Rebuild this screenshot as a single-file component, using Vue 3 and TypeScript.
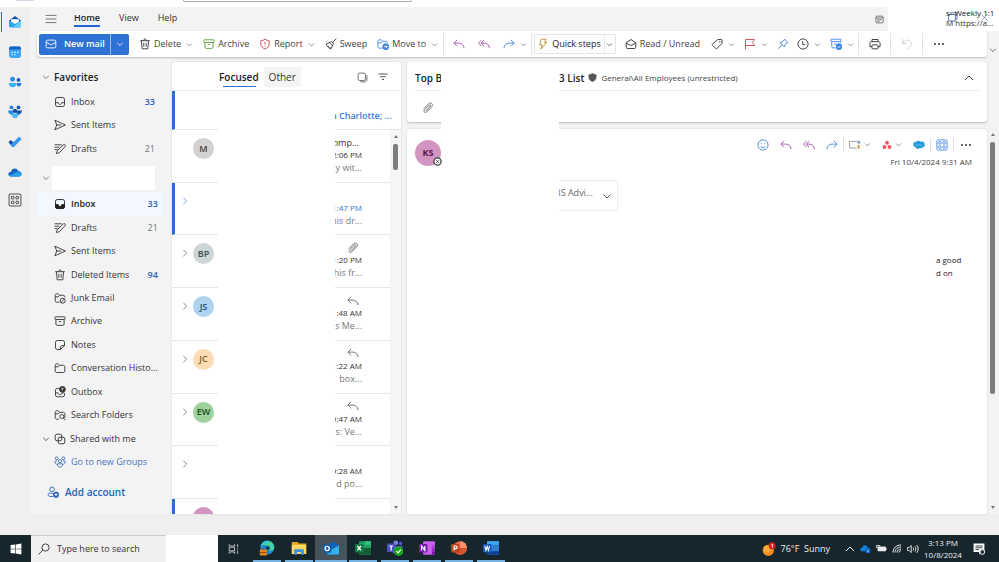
<script setup lang="ts">
interface Folder { icon: string; name: string; count?: number; strong?: boolean; selected?: boolean; link?: boolean; chevron?: boolean }
interface Mail { initials?: string; tone?: string; open?: boolean; unread?: boolean; flag?: string; sender?: string; time: string; preview: string }
interface Command { icon: string; label?: string; menu?: boolean; tone?: string; name: string }

const apps: { icon: string; name: string }[] = [
  { icon: 'app-mail', name: 'Mail' },
  { icon: 'app-calendar', name: 'Calendar' },
  { icon: 'app-people', name: 'People' },
  { icon: 'app-groups', name: 'Groups' },
  { icon: 'app-todo', name: 'To Do' },
  { icon: 'app-cloud', name: 'OneDrive' },
  { icon: 'app-more', name: 'More apps' },
]

const favorites: Folder[] = [
  { icon: 'inbox', name: 'Inbox', count: 33, strong: true },
  { icon: 'send', name: 'Sent Items' },
  { icon: 'draft', name: 'Drafts', count: 21 },
]

const folders: Folder[] = [
  { icon: 'inbox-fill', name: 'Inbox', count: 33, strong: true, selected: true },
  { icon: 'draft', name: 'Drafts', count: 21 },
  { icon: 'send', name: 'Sent Items' },
  { icon: 'trash', name: 'Deleted Items', count: 94, strong: true },
  { icon: 'junk', name: 'Junk Email' },
  { icon: 'archive', name: 'Archive' },
  { icon: 'note', name: 'Notes' },
  { icon: 'folder', name: 'Conversation Histo...' },
  { icon: 'outbox', name: 'Outbox' },
  { icon: 'folder-search', name: 'Search Folders' },
  { icon: 'shared', name: 'Shared with me', chevron: true },
  { icon: 'groups', name: 'Go to new Groups', link: true },
]

const edit: Command[] = [
  { icon: 'trash', label: 'Delete', menu: true, name: 'Delete' },
  { icon: 'archive', label: 'Archive', tone: 'green', name: 'Archive' },
  { icon: 'report', label: 'Report', menu: true, tone: 'red', name: 'Report' },
  { icon: 'sweep', label: 'Sweep', name: 'Sweep' },
  { icon: 'move', label: 'Move to', menu: true, tone: 'blue', name: 'Move to' },
]
const respond: Command[] = [
  { icon: 'reply', tone: 'purple', name: 'Reply' },
  { icon: 'reply-all', tone: 'purple', name: 'Reply all' },
  { icon: 'forward', tone: 'blue', menu: true, name: 'Forward' },
]
const organise: Command[] = [
  { icon: 'tag', menu: true, name: 'Categorize' },
  { icon: 'flag', menu: true, tone: 'red', name: 'Flag' },
  { icon: 'pin', tone: 'blue', name: 'Pin' },
  { icon: 'clock', menu: true, name: 'Snooze' },
  { icon: 'policy', menu: true, tone: 'blue', name: 'Assign policy' },
]

const mails: Mail[] = [
  { initials: 'M', tone: 'grey', sender: 'omp...', time: '2:06 PM', preview: 'y wit...' },
  { open: true, unread: true, time: '1:47 PM', preview: 'his dr...' },
  { initials: 'BP', tone: 'mist', open: true, flag: 'clip', time: '1:20 PM', preview: 'his fr...' },
  { initials: 'JS', tone: 'sky', open: true, flag: 'reply', time: '1:48 AM', preview: 's Me...' },
  { initials: 'JC', tone: 'peach', open: true, flag: 'reply', time: '1:22 AM', preview: 'box...' },
  { initials: 'EW', tone: 'mint', open: true, flag: 'reply', time: '9:47 AM', preview: 's: Ve...' },
  { open: true, time: '9:28 AM', preview: 'd po...' },
]

const tasks: { icon: string; name: string; active?: boolean }[] = [
  { icon: 'edge', name: 'Edge' },
  { icon: 'explorer', name: 'File Explorer' },
  { icon: 'outlook', name: 'Outlook', active: true },
  { icon: 'excel', name: 'Excel' },
  { icon: 'teams', name: 'Teams' },
  { icon: 'onenote', name: 'OneNote' },
  { icon: 'powerpoint', name: 'PowerPoint' },
  { icon: 'word', name: 'Word' },
]
</script>

<template>
  <div class="screen">
    <svg class="sprite" aria-hidden="true">
      <symbol id="chev" viewBox="0 0 20 20"><path d="M3 7l7 7 7-7" /></symbol>
      <symbol id="chev-up" viewBox="0 0 20 20"><path d="M2 14l8-8 8 8" /></symbol>
      <symbol id="chev-right" viewBox="0 0 20 20"><path d="M6 2l8 8-8 8" /></symbol>
      <symbol id="menu" viewBox="0 0 20 20"><path d="M1 4h18M1 10h18M1 16h18" /></symbol>
      <symbol id="mail" viewBox="0 0 20 20"><rect x="2" y="3.500" width="16" height="13" rx="2.500" /><path d="M2 7l8 4.500L18 7" /></symbol>
      <symbol id="inbox" viewBox="0 0 20 20"><rect x="2.500" y="2.500" width="15" height="15" rx="3" /><path d="M3 11h4c0 4 6 4 6 0h4" /></symbol>
      <symbol id="inbox-fill" viewBox="0 0 20 20"><rect x="2.500" y="2.500" width="15" height="15" rx="3" /><path d="M2.500 11H7c0 4 6 4 6 0h4.500v3.500a3 3 0 0 1-3 3h-9a3 3 0 0 1-3-3z" fill="currentColor" /></symbol>
      <symbol id="send" viewBox="0 0 20 20"><path d="M1.500 2L19 10 1.500 18 4.500 10zM4.500 10H12" /></symbol>
      <symbol id="draft" viewBox="0 0 20 20"><path d="M1 3h12M1 7h8M1 11h5M4 17.500l1-4L15.500 3c2-1.500 4.500 1 3 3L9 16.200z" /></symbol>
      <symbol id="trash" viewBox="0 0 20 20"><path d="M2 4.500h16M7.500 4.500c0-3.500 5-3.500 5 0M4 4.500L5.300 18h9.400L16 4.500M8 8v6.500M12 8v6.500" /></symbol>
      <symbol id="folder" viewBox="0 0 20 20"><path d="M2 15V5.500C2 4 3 3 4.500 3H7l2.500 2.500h6c1.500 0 2.500 1 2.500 2.500v7c0 1.500-1 2.500-2.500 2.500h-11C3 17.500 2 16.500 2 15zM2 8h5l2.500-2.500" /></symbol>
      <symbol id="junk" viewBox="0 0 20 20"><path d="M9 17H4.500C3 17 2 16 2 14.500V5.500C2 4 3 3 4.500 3H7l2.500 2.500h6c1.500 0 2.500 1 2.500 2.500v1M2 8h5l2.500-2.500" /><circle cx="14.500" cy="14.500" r="4.200" /><path d="M11.500 17.500l6-6" /></symbol>
      <symbol id="folder-search" viewBox="0 0 20 20"><path d="M8 17H4.500C3 17 2 16 2 14.500V5.500C2 4 3 3 4.500 3H7l2.500 2.500h6c1.500 0 2.500 1 2.500 2.500v7M2 8h5l2.500-2.500" /><circle cx="13" cy="12.500" r="3.300" /><path d="M15.500 15l3.500 3.500" /></symbol>
      <symbol id="archive" viewBox="0 0 20 20"><rect x="1.500" y="3" width="17" height="4.500" rx="1" /><path d="M3.200 7.500V15c0 1.500.8 2.300 2.300 2.300h9c1.500 0 2.300-.8 2.300-2.300V7.500M8 11h4" /></symbol>
      <symbol id="note" viewBox="0 0 20 20"><path d="M11 17.500H5.500a3 3 0 0 1-3-3v-9a3 3 0 0 1 3-3h9a3 3 0 0 1 3 3V11zM11 17.500v-4c0-1.500 1-2.500 2.500-2.500h4" /></symbol>
      <symbol id="outbox" viewBox="0 0 20 20"><path d="M9 4H5.500a3 3 0 0 0-3 3v8a3 3 0 0 0 3 3h9a3 3 0 0 0 3-3v-3M3 11.500h4c0 4 6 4 6 0h4" /><circle cx="14" cy="5.500" r="4.800" fill="currentColor" /><path d="M14 8V3.500M12 5l2-2 2 2" stroke="#fff" stroke-width="1" /></symbol>
      <symbol id="shared" viewBox="0 0 20 20"><rect x="2" y="2" width="11" height="11" rx="3" /><rect x="7" y="7" width="11" height="11" rx="3" /></symbol>
      <symbol id="groups" viewBox="0 0 20 20"><circle cx="10" cy="8.500" r="2.700" /><circle cx="4.500" cy="3.800" r="2.400" /><circle cx="15.500" cy="3.800" r="2.400" /><path d="M5.500 13h9c0 7.500-9 7.500-9 0zM5 8.500H1.500c-.5 3 1 5 3 5.500M15 8.500h3.500c.5 3-1 5-3 5.500" /></symbol>
      <symbol id="person-add" viewBox="0 0 20 20"><circle cx="8.500" cy="5.500" r="3.800" /><path d="M10 17.500H5.500C1 17.500 1 12 4 12h6" /><circle cx="15" cy="14.500" r="4.500" fill="currentColor" /><path d="M15 12v5M12.500 14.500h5" stroke="#fff" /></symbol>
      <symbol id="report" viewBox="0 0 20 20"><path d="M10 2c2.500 1.800 4.500 2.300 7 2.500V10c0 4-2.500 6.500-7 8.300C5.500 16.500 3 14 3 10V4.500C5.500 4.300 7.500 3.800 10 2zM10 6v5M10 13.200v1.200" /></symbol>
      <symbol id="sweep" viewBox="0 0 20 20"><path d="M19 1l-7 7M9.500 6.500c2-1.500 5.500 2 4 4L10 18c-3-.5-7-4-8-8zM7.500 8l5 5M6 13l-1 2M9 15l-1 2" /></symbol>
      <symbol id="move" viewBox="0 0 20 20"><path d="M9 17H4c-1.500 0-2.500-1-2.500-2.500V5.500C1.500 4 2.500 3 4 3h3l2.500 2.500H15c1.500 0 2.500 1 2.500 2.500v1M1.500 8H7l2.500-2.500" /><circle cx="14.500" cy="14.500" r="5" fill="currentColor" /><path d="M12 14.500h5M15 12.500l2 2-2 2" stroke="#fff" /></symbol>
      <symbol id="reply" viewBox="0 0 20 20"><path d="M7 3L1.500 8.500 7 14M1.500 8.500h8c5 0 8.500 3 9 8.500" /></symbol>
      <symbol id="reply-all" viewBox="0 0 20 20"><path d="M5.500 3.500L1 8.500l4.500 5M10 3.500L5.500 8.500l4.500 5M5.500 8.500h5c5 0 8 3.500 8.500 8.500" /></symbol>
      <symbol id="forward" viewBox="0 0 20 20"><path d="M13 3l5.500 5.500L13 14M18.500 8.500h-8c-5 0-8.500 3-9 8.500" /></symbol>
      <symbol id="bolt" viewBox="0 0 20 20"><path d="M7 2h8l-2.500 5.500H16L6.500 18.500l2-7H4.500z" /></symbol>
      <symbol id="read" viewBox="0 0 20 20"><path d="M2 8l8-5.500L18 8v7.500c0 1-.8 2-2 2H4c-1.200 0-2-1-2-2zM2 8.500l8 4 8-4" /></symbol>
      <symbol id="tag" viewBox="0 0 20 20"><path d="M11.500 2.500H17c1 0 1.500.6 1.500 1.500v5L10 17.300c-.8.700-1.500.7-2.200 0L2.500 12c-.7-.7-.7-1.500 0-2.200z" /><circle cx="14.800" cy="6.200" r=".6" /></symbol>
      <symbol id="flag" viewBox="0 0 20 20"><path d="M2.500 19V2.500h15L14 7.500l3.500 5h-15" /></symbol>
      <symbol id="pin" viewBox="0 0 20 20"><path d="M12.500 2l5.500 5.500-4 2.500-1.500 5L5 7.500 10 6zM8.500 11.500L2 18" /></symbol>
      <symbol id="clock" viewBox="0 0 20 20"><circle cx="10" cy="10" r="8.500" /><path d="M9.500 5v6h4" /></symbol>
      <symbol id="policy" viewBox="0 0 20 20"><rect x="1.500" y="2" width="17" height="4" rx="1" /><path d="M3 6v8.500c0 1.500.8 2 2 2h4M17 6v3M7 10h5" /><circle cx="15" cy="14.500" r="4.800" fill="currentColor" /><path d="M12.800 14.500l1.600 1.600 2.800-3" stroke="#fff" /></symbol>
      <symbol id="print" viewBox="0 0 20 20"><path d="M5 6V2.500h10V6M5 14.500H1.500V9c0-2 1-3 3-3h11c2 0 3 1 3 3v5.500H15" /><rect x="5" y="11.500" width="10" height="6.500" rx="1" /></symbol>
      <symbol id="undo" viewBox="0 0 20 20"><path d="M3 2v7h7M3 9c4-6 9-7 12.500-3.500S18 13 10 18.500" /></symbol>
      <symbol id="clip" viewBox="0 0 20 20"><path d="M3 11l8-8c4-3.500 8.500 1 5.500 4.500L8 16.500c-3 2.500-6-.5-4-3.200l8-8c2-1.500 3.500.4 2 2l-7.500 7.500" /></symbol>
      <symbol id="filter" viewBox="0 0 20 20"><path d="M1 4h18M4.500 9.500h11M8 15h4" /></symbol>
      <symbol id="stack" viewBox="0 0 20 20"><rect x="2" y="2" width="13.500" height="13.500" rx="3" /><path d="M6 18h7c3.500 0 5-1.500 5-5V6" /></symbol>
      <symbol id="event" viewBox="0 0 20 20"><rect x="2" y="2.500" width="16" height="15" rx="2" /><path d="M2 6.500h16M5 10.500h10M5 14h5" /></symbol>
      <symbol id="shield" viewBox="0 0 20 20"><path d="M10 1c2.500 2 5 2.600 8 2.800V9c0 5-2.800 8-8 10-5.200-2-8-5-8-10V3.800C5 3.600 7.500 3 10 1z" fill="currentColor" /></symbol>
      <symbol id="smile" viewBox="0 0 20 20"><circle cx="10" cy="10" r="8.500" /><path d="M6 12.500c2 2.500 6 2.500 8 0M7 7v1.500M13 7v1.500" /></symbol>
      <symbol id="grid" viewBox="0 0 20 20"><rect x="1.500" y="1.500" width="17" height="17" rx="2.500" /><rect x="4.500" y="4.500" width="4" height="4" rx="1" /><rect x="11.500" y="4.500" width="4" height="4" rx="1" /><rect x="4.500" y="11.500" width="4" height="4" rx="1" /><rect x="11.500" y="11.500" width="4" height="4" rx="1" /></symbol>
      <symbol id="addin" viewBox="0 0 20 20"><path d="M1 4h17v4M1 4v11h12" stroke="#999" /><path d="M16 10v6" stroke="#c09030" stroke-width="3" /><circle cx="16" cy="6" r="1.500" fill="#3b78d8" stroke="none" /></symbol>
      <symbol id="asana" viewBox="0 0 20 20"><g fill="#f0525f" stroke="none"><circle cx="10" cy="5.500" r="3.800" /><circle cx="5" cy="14" r="3.800" /><circle cx="15" cy="14" r="3.800" /></g></symbol>
      <symbol id="salesforce" viewBox="0 0 20 20"><g fill="#229bd8" stroke="none"><circle cx="5" cy="9" r="4.500" /><circle cx="9" cy="7" r="4" /><circle cx="14.500" cy="9" r="5" /><circle cx="8" cy="12.500" r="4" /><circle cx="12.500" cy="12" r="3.500" /></g><path d="M4 10h12" stroke="#8fd0f2" stroke-width="1" /></symbol>
      <symbol id="restore" viewBox="0 0 20 20"><rect x="1.500" y="5" width="13" height="13" /><path d="M5.500 5V1.500H18V14h-3.500" /></symbol>
      <symbol id="close" viewBox="0 0 20 20"><path d="M1 1l18 18M19 1L1 19" /></symbol>
      <symbol id="search" viewBox="0 0 20 20"><circle cx="12.500" cy="7.500" r="6" /><path d="M8 12l-7 7" /></symbol>

      <symbol id="app-mail" viewBox="0 0 20 20"><g stroke="none"><path d="M2 7.500L10 1.500l8 6V13H2z" fill="#174ea6" /><path d="M4.500 6h11v7h-11z" fill="#fff" /><path d="M1.500 8l8.500 5 8.500-5v7.500c0 1.700-1 2.500-2.500 2.500H4c-1.500 0-2.500-.8-2.500-2.500z" fill="#2aa5ee" /><path d="M18.500 8v7.500c0 1.700-1 2.500-2.500 2.500H7z" fill="#5ed0f8" /></g></symbol>
      <symbol id="app-calendar" viewBox="0 0 20 20"><g stroke="none"><rect x="1.500" y="2" width="17" height="16.500" rx="3" fill="#3da4f2" /><path d="M1.500 6.500V5c0-2 1-3 3-3h11c2 0 3 1 3 3v1.500z" fill="#1760bd" /></g><path d="M5 10.500h2M9 10.500h2M13 10.500h2M5 14h2M9 14h2" stroke="#fff" /></symbol>
      <symbol id="app-people" viewBox="0 0 20 20"><g stroke="none"><circle cx="6.500" cy="6" r="3.500" fill="#2b8ae8" /><circle cx="15" cy="7" r="2.800" fill="#1a5fc0" /><path d="M1 11.500h11c1 8-11 8-11 0z" fill="#35b6f5" /><path d="M12.500 11.500H19c.5 6-6.500 6-6.500 2z" fill="#2777d8" /></g></symbol>
      <symbol id="app-groups" viewBox="0 0 20 20"><g stroke="none"><circle cx="5" cy="3.500" r="2.700" fill="#2b7de0" /><circle cx="15" cy="3.500" r="2.700" fill="#1a5fc0" /><path d="M0 8h8v7C3 14 0 12 0 8z" fill="#258de8" /><path d="M20 8h-8v7c5-1 8-3 8-7z" fill="#1555b0" /><circle cx="10" cy="8.500" r="3" fill="#164ba0" /><path d="M5 12h10c0 9-10 9-10 0z" fill="#45b8f4" /></g></symbol>
      <symbol id="app-todo" viewBox="0 0 20 20"><g stroke="none"><path d="M.5 10.500L4 7l6 5.500-3.500 4.500z" fill="#174fae" /><path d="M6.500 17L3.800 14 16 2.500l3.500 3.300L8.500 17c-.7.700-1.400.7-2 0z" fill="#3297ee" /></g></symbol>
      <symbol id="app-cloud" viewBox="0 0 20 20"><g stroke="none"><path d="M4 16.500C-1 16.500-.5 9.500 4.500 9.500 5 4 13 3 14.500 8.500c6 0 6.500 8 1 8z" fill="#1565c0" /><path d="M1.500 15L13 9.500c8-2 8 7 2.500 7H4c-1.200 0-2-.6-2.500-1.500z" fill="#2a9bea" /></g></symbol>
      <symbol id="app-more" viewBox="0 0 20 20"><g fill="none" stroke="#555"><rect x="1.500" y="1.500" width="17" height="17" rx="2" /><circle cx="6.700" cy="6.700" r="2" /><circle cx="13.300" cy="6.700" r="2" /><circle cx="6.700" cy="13.300" r="2" /><circle cx="13.300" cy="13.300" r="2" /></g></symbol>

      <symbol id="windows" viewBox="0 0 20 20"><path d="M1 3.500L9 2.500v7H1zM10 2.300L19 1v8.500h-9zM1 10.500h8v7l-8-1zM10 10.500h9V19l-9-1.300z" fill="#fff" stroke="none" /></symbol>
      <symbol id="taskview" viewBox="0 0 20 20"><path d="M2 2v3h9V2M2 18v-3h9v3M2 7h9v6H2zM16 2v5M16 9v2M16 13v5" /></symbol>
      <symbol id="edge" viewBox="0 0 20 20"><g stroke="none"><circle cx="10.500" cy="9.500" r="8.700" fill="#1b87d6" /><path d="M2 8C4-1 17-1.500 19 8c1 6-6 7-7 3.500C13 7 7 4 2 8z" fill="#43d39a" /><path d="M2 8C4 1 10 0 14 2 9 2 6 5 2 8z" fill="#2fc3e6" /><circle cx="11" cy="10" r="2.600" fill="#123a63" /><rect x="1" y="12" width="9" height="7.500" rx="1" fill="#e08a1c" /><rect x="1" y="15" width="9" height="1" fill="#7a4206" /><rect x="4" y="10.500" width="3" height="1.800" fill="#8c4f0c" /></g></symbol>
      <symbol id="explorer" viewBox="0 0 20 20"><g stroke="none"><path d="M1 2.500h7l2 2h9v13H1z" fill="#e5a51d" /><path d="M1 6h18v11.500H1z" fill="#fbd867" /><path d="M4 18.500V11.500h12v7h-3.500V15h-5v3.500z" fill="#3a93df" /></g></symbol>
      <symbol id="outlook" viewBox="0 0 20 20"><g stroke="none"><path d="M5 7l8-5.500L20 7v9.500c0 1-.5 1.500-1.500 1.500H6.500C5.500 18 5 17.500 5 16.500z" fill="#1364b8" /><path d="M5 15l15-8v9.500c0 1-.5 1.500-1.500 1.500H6z" fill="#35b2f0" /><rect x="0" y="5.500" width="10.500" height="10.500" rx="1.500" fill="#0f5cb5" /></g><circle cx="5.200" cy="10.700" r="2.600" stroke="#fff" stroke-width="1.600" /></symbol>
      <symbol id="excel" viewBox="0 0 20 20"><g stroke="none"><rect x="5" y="1.500" width="15" height="17" rx="1.500" fill="#21a366" /><path d="M5 10h15v7c0 1-.5 1.500-1.500 1.500h-12C5.500 18.500 5 18 5 17z" fill="#185c37" /><path d="M12.500 1.500h6c1 0 1.500.5 1.500 1.500v3h-7.500z" fill="#33c481" /><rect x="0" y="5" width="10.500" height="10.500" rx="1" fill="#107c41" /></g><path d="M3 7.500l4.500 5.500M7.500 7.500L3 13" stroke="#fff" stroke-width="1.600" /></symbol>
      <symbol id="teams" viewBox="0 0 20 20"><g stroke="none"><circle cx="11" cy="3.500" r="3" fill="#7b83eb" /><circle cx="17" cy="4.500" r="2.200" fill="#5059c9" /><path d="M6 7.500h13.500V14c-1 5-12 5-13.500 0z" fill="#5059c9" /><rect x="0" y="4.500" width="10.500" height="10.500" rx="1" fill="#4b53bc" /><circle cx="14.500" cy="14" r="6" fill="#18a318" /></g><path d="M3 7.500h4.500M5.200 7.500v5.500M11.800 14l2 2 3.500-4" stroke="#fff" stroke-width="1.500" /></symbol>
      <symbol id="onenote" viewBox="0 0 20 20"><g stroke="none"><rect x="5" y="1.500" width="15" height="17" rx="1.500" fill="#ca64ea" /><path d="M16 6h4v4.200h-4z" fill="#ae4bd5" /><path d="M16 10.200h4v4.200h-4z" fill="#9332bf" /><path d="M16 14.400h4V17c0 1-.5 1.500-1.500 1.500H16z" fill="#7719aa" /><rect x="0" y="5" width="10.500" height="10.500" rx="1" fill="#7719aa" /></g><path d="M3.200 13V7.500L7.300 13V7.500" stroke="#fff" stroke-width="1.500" /></symbol>
      <symbol id="powerpoint" viewBox="0 0 20 20"><g stroke="none"><circle cx="11.500" cy="10" r="8.500" fill="#ed6c47" /><path d="M11.500 1.500A8.500 8.500 0 0 1 20 10h-8.500z" fill="#ff8f6b" /><path d="M3 10h17c0 11-17 11-17 0z" fill="#d35230" /><rect x="0" y="5" width="10.500" height="10.500" rx="1" fill="#c43e1c" /></g><path d="M4 13.200V7.500h2.200c2 0 2 3.200 0 3.200H4" stroke="#fff" stroke-width="1.500" /></symbol>
      <symbol id="word" viewBox="0 0 20 20"><g stroke="none"><rect x="5" y="1.500" width="15" height="17" rx="1.500" fill="#2b7cd3" /><path d="M5 3c0-1 .5-1.500 1.500-1.500h12c1 0 1.500.5 1.500 1.500v3H5z" fill="#41a5ee" /><path d="M5 14.200h15V17c0 1-.5 1.500-1.500 1.500h-12C5.500 18.500 5 18 5 17z" fill="#103f91" /><rect x="0" y="5" width="10.500" height="10.500" rx="1" fill="#185abd" /></g><path d="M2.200 7.500l1.500 5.500 1.500-5 1.500 5 1.500-5.500" stroke="#fff" stroke-width="1.300" /></symbol>
      <symbol id="sun" viewBox="0 0 20 20"><g stroke="none"><circle cx="9" cy="12" r="8" fill="#f58a1f" /><circle cx="7" cy="10" r="5" fill="#fba83a" /><circle cx="14.500" cy="5.500" r="5" fill="#d3211f" /></g><path d="M13.500 4l1.300-1v5" stroke="#fff" stroke-width="1.200" /></symbol>
      <symbol id="tray-cloud" viewBox="0 0 20 20"><g stroke="none"><path d="M4 15C-1 15-.5 8 4 8.500 5 3 13 3 14 8c5 0 5 7 1 7z" fill="#1480dc" /><circle cx="14.500" cy="14" r="5" fill="#0b62b8" /></g><path d="M14.500 13v4M14.500 11v.5" stroke="#fff" /></symbol>
      <symbol id="battery" viewBox="0 0 20 20"><rect x="3" y="6.500" width="15" height="8.500" fill="#e8ecee" stroke="none" /><path d="M1 4.500h6v4H1zM18.500 9v3.500" /></symbol>
      <symbol id="wifi" viewBox="0 0 20 20"><path d="M2 17C2 8 9 2 18 2M6 17C6 10.500 11 6 18 6M10 17c0-4 3.500-7 8-7M14 17c0-2 2-3.500 4-3.500" /></symbol>
      <symbol id="volume" viewBox="0 0 20 20"><path d="M1 7.500h2.500L7 4v12l-3.500-3.500H1zM10 7.500c1.300 1.500 1.300 3.500 0 5M13 5.500c2.300 2.500 2.300 6.500 0 9M16 3.500c3.500 4 3.500 9 0 13" /></symbol>
      <symbol id="action" viewBox="0 0 20 20"><path d="M1 1h18v14h-6l-3 4v-4H1z" fill="#fff" stroke="none" /><path d="M4 5h12M4 8h12M4 11h6" stroke="#26343c" /><circle cx="15.500" cy="15" r="4" fill="#26343c" stroke="#fff" /></symbol>
    </svg>

    <header class="titlebar"><span class="stub"></span><span class="searchedge"></span></header>

    <div class="window">
      <nav class="rail" aria-label="Apps">
        <button v-for="(a, i) in apps" :key="a.icon" :class="['app', { current: i === 0 }]" :aria-label="a.name">
          <svg class="ic i14"><use :href="'#' + a.icon" /></svg>
        </button>
      </nav>

      <div class="content">
        <div class="tabs">
          <button class="burger" aria-label="Toggle navigation"><svg class="ic i12"><use href="#menu" /></svg></button>
          <button class="tab active">Home</button>
          <button class="tab">View</button>
          <button class="tab">Help</button>
          <button class="day" aria-label="My Day"><svg class="ic i9"><use href="#event" /></svg></button>
          <div class="reminder">
            <div class="remindertext"><b>s- Weekly 1:1</b><span>M https://a...</span></div>
            <button class="winbtn restore" aria-label="Restore"><svg class="ic i10"><use href="#restore" /></svg></button>
            <button class="winbtn close" aria-label="Close"><svg class="ic i7"><use href="#close" /></svg></button>
          </div>
        </div>

        <div class="ribbonrow">
          <div class="ribbon">
            <div class="newmail">
              <button class="new"><svg class="ic i12"><use href="#mail" /></svg>New mail</button>
              <button class="newmore" aria-label="New item options"><svg class="ic i8"><use href="#chev" /></svg></button>
            </div>
            <div class="group edit">
              <button v-for="c in edit" :key="c.name" :class="['cmd', c.tone]">
                <svg class="ic i12"><use :href="'#' + c.icon" /></svg><span>{{ c.label }}</span>
                <svg v-if="c.menu" class="ic i6 caret"><use href="#chev" /></svg>
              </button>
            </div>
            <div class="group respond">
              <button v-for="c in respond" :key="c.name" :class="['cmd', c.tone]" :aria-label="c.name">
                <svg class="ic i12"><use :href="'#' + c.icon" /></svg>
                <svg v-if="c.menu" class="ic i6 caret"><use href="#chev" /></svg>
              </button>
            </div>
            <div class="quick">
              <button class="cmd gold"><svg class="ic i12"><use href="#bolt" /></svg><span class="dark">Quick steps</span></button>
              <button class="quickmore" aria-label="Quick step options"><svg class="ic i6"><use href="#chev" /></svg></button>
            </div>
            <button class="cmd read"><svg class="ic i12"><use href="#read" /></svg><span>Read / Unread</span></button>
            <div class="group organise">
              <button v-for="c in organise" :key="c.name" :class="['cmd', c.tone]" :aria-label="c.name">
                <svg class="ic i12"><use :href="'#' + c.icon" /></svg>
                <svg v-if="c.menu" class="ic i6 caret"><use href="#chev" /></svg>
              </button>
            </div>
            <button class="cmd cell" aria-label="Print"><svg class="ic i12"><use href="#print" /></svg></button>
            <button class="cmd cell faint" aria-label="Undo"><svg class="ic i12"><use href="#undo" /></svg></button>
            <button class="cmd cell dots" aria-label="More options"><i></i><i></i><i></i></button>
          </div>
          <button class="collapse" aria-label="Ribbon options"><svg class="ic i8"><use href="#chev" /></svg></button>
        </div>

        <main class="panes">
          <nav class="folders" aria-label="Folders">
            <h2 class="favhead"><svg class="ic i8"><use href="#chev" /></svg>Favorites</h2>
            <ul class="tree short">
              <li v-for="f in favorites" :key="f.name">
                <a href="#" class="folder"><svg class="ic i12"><use :href="'#' + f.icon" /></svg><span>{{ f.name }}</span><em v-if="f.count" :class="{ bold: f.strong }">{{ f.count }}</em></a>
              </li>
            </ul>
            <div class="account"><svg class="ic i8"><use href="#chev" /></svg><span class="blank"></span></div>
            <ul class="tree long">
              <li v-for="f in folders" :key="f.name">
                <a href="#" :class="['folder', { selected: f.selected, link: f.link, parent: f.chevron }]">
                  <svg v-if="f.chevron" class="ic i8"><use href="#chev" /></svg>
                  <svg class="ic i12"><use :href="'#' + f.icon" /></svg><span>{{ f.name }}</span><em v-if="f.count" :class="{ bold: f.strong }">{{ f.count }}</em>
                </a>
              </li>
            </ul>
            <button class="addaccount"><svg class="ic i12"><use href="#person-add" /></svg>Add account</button>
          </nav>

          <section class="list card">
            <div class="listhead">
              <button class="filter on">Focused</button>
              <button class="filter off">Other</button>
              <button class="tool first" aria-label="Select"><svg class="ic i11"><use href="#stack" /></svg></button>
              <button class="tool" aria-label="Filter"><svg class="ic i10"><use href="#filter" /></svg></button>
            </div>
            <div class="other"><div class="lead unread"></div><div></div><div class="tail"><span>n Charlotte; ...</span></div></div>
            <div class="scroller">
              <div class="rows">
                <article v-for="m in mails" :key="m.time" class="mail">
                  <div :class="['lead', { unread: m.unread }]">
                    <svg class="ic i8 expand" :class="{ hidden: !m.open }"><use href="#chev-right" /></svg>
                    <span v-if="m.initials" :class="['avatar', m.tone]">{{ m.initials }}</span>
                  </div>
                  <div></div>
                  <div class="tail">
                    <span class="line mark">{{ m.sender }}<svg v-if="m.flag" class="ic i12"><use :href="'#' + m.flag" /></svg></span>
                    <span :class="['line', 'time', { fresh: m.unread }]">{{ m.time }}</span>
                    <span class="line preview">{{ m.preview }}</span>
                  </div>
                </article>
                <article class="mail cut"><div class="lead unread"><span class="avatar pink"></span></div></article>
              </div>
              <div class="bar"><i class="up"></i><i class="thumb short"></i><i class="down"></i></div>
            </div>
          </section>

          <section class="reading">
            <div class="card subject">
              <div class="titleline">
                <h1><span class="tleft">Top B</span><span>3 List</span></h1>
                <svg class="ic i9 shield"><use href="#shield" /></svg>
                <span class="label">General\All Employees (unrestricted)</span>
                <button class="fold" aria-label="Collapse header"><svg class="ic i10"><use href="#chev-up" /></svg></button>
              </div>
              <div class="attachline"><svg class="ic i12"><use href="#clip" /></svg></div>
            </div>
            <div class="card message">
              <div class="msghead">
                <span class="avatar big pink">KS<svg class="presence" viewBox="0 0 10 10"><circle cx="5" cy="5" r="4" fill="#fff" stroke="#444" stroke-width="1.500" /><path d="M3.500 3.500l3 3M6.500 3.500l-3 3" stroke="#444" /></svg></span>
                <div class="side">
                  <div class="actions">
                    <button class="blue" aria-label="React"><svg class="ic i12"><use href="#smile" /></svg></button>
                    <button class="purple" aria-label="Reply"><svg class="ic i12"><use href="#reply" /></svg></button>
                    <button class="purple" aria-label="Reply all"><svg class="ic i12"><use href="#reply-all" /></svg></button>
                    <button class="blue" aria-label="Forward"><svg class="ic i12"><use href="#forward" /></svg></button>
                    <button class="pair ruled" aria-label="Report add-in"><svg class="ic i12"><use href="#addin" /></svg><svg class="ic i6"><use href="#chev" /></svg></button>
                    <button class="pair" aria-label="Asana"><svg class="ic i10"><use href="#asana" /></svg><svg class="ic i6"><use href="#chev" /></svg></button>
                    <button class="salesforce" aria-label="Salesforce"><svg class="ic i12"><use href="#salesforce" /></svg></button>
                    <button class="blue ruled" aria-label="Apps"><svg class="ic i12"><use href="#grid" /></svg></button>
                    <button class="dots ruled" aria-label="More actions"><i></i><i></i><i></i></button>
                  </div>
                  <time>Fri 10/4/2024 9:31 AM</time>
                </div>
              </div>
              <div class="attachment"><span class="file"><span>BS Advi...</span></span><button aria-label="Attachment options"><svg class="ic i10"><use href="#chev" /></svg></button></div>
              <p class="body"><span>a good</span><span>d on</span></p>
            </div>
            <div class="cover"></div>
          </section>
          <div class="bar page"><i class="up"></i><i class="thumb"></i><i class="down"></i></div>
        </main>
      </div>
    </div>

    <footer class="taskbar">
      <button class="start" aria-label="Start"><svg class="ic i12"><use href="#windows" /></svg></button>
      <label class="find"><svg class="ic i12"><use href="#search" /></svg><input type="text" placeholder="Type here to search" aria-label="Type here to search" /></label>
      <span class="gap"></span>
      <button class="task plain" aria-label="Task View"><svg class="ic i12"><use href="#taskview" /></svg></button>
      <button v-for="t in tasks" :key="t.name" :class="['task', { active: t.active }]" :aria-label="t.name"><svg class="ic i16"><use :href="'#' + t.icon" /></svg></button>
      <div class="weather"><svg class="ic i14"><use href="#sun" /></svg><span>76°F&nbsp; Sunny</span></div>
      <div class="tray">
        <svg class="ic i10"><use href="#chev-up" /></svg>
        <svg class="ic i11"><use href="#tray-cloud" /></svg>
        <svg class="ic i11"><use href="#battery" /></svg>
        <svg class="ic i10"><use href="#wifi" /></svg>
        <svg class="ic i12"><use href="#volume" /></svg>
      </div>
      <div class="clock"><span>3:13 PM</span><span>10/8/2024</span></div>
      <button class="notify" aria-label="Notifications"><svg class="ic i12"><use href="#action" /></svg></button>
    </footer>
  </div>
</template>

<style>
body { margin: 0; overflow: hidden; background: #efefef; }
</style>

<style scoped>
.screen { height: 100vh; display: flex; flex-direction: column; background: #efefef; color: #333; font-family: "Open Sans", "Noto Sans", sans-serif; font-size: 9px; line-height: 12px; }
.screen *, .screen *::before, .screen *::after { box-sizing: border-box; }
button { font: inherit; color: inherit; background: none; border: 0; padding: 0; margin: 0; display: flex; align-items: center; flex: none; white-space: nowrap; }
a { color: inherit; text-decoration: none; }
.sprite { position: absolute; width: 0; height: 0; }
.ic { fill: none; stroke: currentColor; stroke-width: 1.500; flex: none; display: block; width: 12px; height: 12px; }
.i6 { width: 7px; height: 7px; stroke-width: 2; }
.i7 { width: 7px; height: 7px; }
.i8 { width: 8px; height: 8px; stroke-width: 2; }
.i9 { width: 9px; height: 9px; }
.i10 { width: 10px; height: 10px; stroke-width: 2; }
.i11 { width: 11px; height: 11px; }
.i14 { width: 14px; height: 14px; }
.i16 { width: 16px; height: 16px; }

.titlebar { height: 7px; flex: none; display: flex; align-items: flex-start; background: #fff; }
.stub { width: 18px; height: 1px; margin-left: 16px; background: #d4d6e6; }
.searchedge { width: 229px; height: 2px; margin-left: 149px; border: 1px solid #aaa; border-top: 0; border-radius: 0 0 2px 2px; }

.window { flex: 1; min-height: 0; display: flex; margin-bottom: 21px; }
.rail { width: 31px; flex: none; display: flex; flex-direction: column; }
.app { height: 30px; padding-left: 8px; }
.app:last-child { height: 26px; }
.app.current::before { content: ""; width: 1px; height: 20px; margin: 0 6px 0 -7px; background: #2c66c4; }
.content { flex: 1; min-width: 0; display: flex; flex-direction: column; background: #f3f3f3; }

.tabs { height: 24px; flex: none; display: flex; padding-left: 14px; }
.burger { width: 29px; color: #666; }
.tab { height: 20px; padding-top: 4px; margin-right: 19px; border-bottom: 2px solid transparent; }
.tab.active { font-weight: 600; border-color: #2165d1; color: #222; }
.day { margin-left: auto; margin-right: 4px; color: #444; }
.reminder { position: relative; width: 111px; background: #fff; overflow: hidden; }
.remindertext { height: 24px; padding-left: 58px; display: flex; flex-direction: column; font-size: 8px; line-height: 10px; color: #333; white-space: nowrap; }
.remindertext b { font-weight: 400; color: #111; padding-top: 1px; }
.winbtn { position: absolute; top: 5px; color: #3a527e; }
.winbtn .ic { stroke-width: 1.500; }
.restore { left: 60px; }
.close { right: 11px; top: 7px; }

.ribbonrow { display: flex; flex: none; padding-left: 6px; height: 26px; }
.ribbon { flex: 1; display: flex; align-items: center; padding-left: 2px; background: #fff; border-radius: 3px; box-shadow: 0 1px 2px #bbb; }
.collapse { width: 12px; justify-content: center; padding-top: 12px; color: #555; }
.newmail { display: flex; height: 21px; width: 90px; background: #2f72d6; border-radius: 2px; color: #fff; font-weight: 600; overflow: hidden; }
.new { flex: 1; gap: 7px; padding-left: 6px; }
.newmore { width: 19px; justify-content: center; border-left: 1px solid #9dbdf0; }
.group { display: flex; height: 22px; align-items: center; }
.cmd { gap: 3px; height: 22px; }
.cmd > span { color: #444; }
.cmd .dark { color: #222; }
.caret { margin-left: 2px; }
.edit { gap: 10px; padding: 0 5px 0 10px; border-right: 1px solid #e2e2e2; }
.respond { gap: 13px; padding: 0 4px 0 9px; border-right: 1px solid #e2e2e2; }
.green > .ic:first-child { color: #5d9b3e; }
.red > .ic:first-child { color: #c4464d; }
.blue, .blue > .ic:first-child { color: #3f83dc; }
.purple, .purple > .ic:first-child { color: #a54fb3; }
.gold > .ic:first-child { color: #b8892f; }
.quick { display: flex; height: 20px; margin-left: 2px; border: 1px solid #e4e4e4; border-radius: 2px; }
.quick .cmd { height: 18px; padding: 0 3px 0 2px; }
.quickmore { width: 11px; justify-content: center; border-left: 1px solid #e4e4e4; }
.read { margin-left: 9px; }
.organise { flex: 1; justify-content: space-between; padding: 0 4px 0 11px; border-right: 1px solid #e2e2e2; }
.cmd .caret { color: #666; }
.cell { width: 32px; justify-content: center; border-right: 1px solid #e2e2e2; }
.faint { color: #ccc; }
.cell.dots { border: 0; margin-right: 32px; }
.dots { gap: 2px; justify-content: center; }
.dots i { width: 2px; height: 2px; border-radius: 1px; background: #333; }

.panes { flex: 1; min-height: 0; display: flex; padding-top: 5px; }
.folders { width: 141px; flex: none; display: flex; flex-direction: column; }
.favhead { height: 28px; flex: none; margin: 0; padding: 2px 0 0 11px; display: flex; align-items: center; gap: 4px; font-size: 10px; font-weight: 600; color: #222; }
.favhead .ic, .account .ic { color: #666; }
.tree { list-style: none; margin: 0; padding: 0 12px 0 6px; display: grid; grid-auto-rows: 1fr; }
.tree.short { flex: 3; }
.tree.long { flex: 12; }
.folder { height: 100%; display: flex; align-items: center; gap: 5px; padding: 0 5px 0 17px; white-space: nowrap; color: #333; }
.folder em { margin-left: auto; font-style: normal; color: #777; }
.folder em.bold { font-weight: 600; color: #2a62b8; }
.folder.selected { background: #f3f8fe; font-weight: 600; color: #222; border-radius: 2px; }
.folder.parent { padding-left: 5px; gap: 4px; }
.folder.link { color: #4674bd; }
.account { height: 32px; flex: none; display: flex; align-items: center; gap: 2px; padding: 4px 17px 0 11px; }
.blank { flex: 1; height: 24px; background: #fff; }
.addaccount { height: 40px; padding: 0 0 4px 16px; gap: 6px; font-size: 10px; font-weight: 600; color: #2a62b8; }

.card { background: #fff; border-radius: 3px; box-shadow: 0 0 2px #ccc; }
.list { width: 229px; flex: none; display: flex; flex-direction: column; border-radius: 3px 3px 0 0; overflow: hidden; }
.listhead { height: 29px; flex: none; display: flex; align-items: center; padding: 2px 13px 0 47px; border-bottom: 1px solid #e9e9e9; }
.filter { height: 20px; font-size: 10px; }
.on { position: relative; font-weight: 600; color: #222; margin-right: 5px; }
.on::after { content: ""; position: absolute; left: 4px; right: 3px; bottom: 0; height: 1px; background: #2f72d6; }
.off { padding: 0 5px; background: #f4f4f4; border-radius: 2px; }
.tool { color: #555; margin-left: 10px; }
.tool.first { margin-left: auto; }
.other, .mail { display: grid; grid-template-columns: 46px 117px 1fr; min-height: 0; }
.other { height: 39px; flex: none; }
.lead { display: flex; border-bottom: 1px solid #e6e6e6; padding: 8px 0 0 9px; gap: 4px; overflow: hidden; }
.lead.unread { border-left: 3px solid #2b6cd4; padding-left: 6px; }
.expand { margin-top: 6px; color: #666; }
.unread .expand { color: #5a8bd4; }
.hidden { visibility: hidden; }
.avatar { width: 21px; height: 21px; border-radius: 50%; display: flex; align-items: center; justify-content: center; flex: none; font-size: 9px; font-weight: 600; }
.grey { background: #d3d2d0; color: #444; }
.shield { color: #555; }
.mist { background: #cdd5d7; color: #3b4b52; }
.sky { background: #aed3f0; color: #1c4a74; }
.peach { background: #fbdcb4; color: #8a5518; }
.mint { background: #9ed29e; color: #174f1c; }
.pink { background: #d295bf; color: #561046; }
.tail { display: flex; flex-direction: column; align-items: flex-end; overflow: hidden; border-bottom: 1px solid #e6e6e6; padding-top: 6px; white-space: nowrap; }
.mail .tail { padding-right: 28px; }
.other .tail { padding: 19px 9px 0 0; font-weight: 600; color: #3b7ad9; }
.line { display: flex; justify-content: flex-end; height: 13px; }
.mark { align-items: center; padding-right: 3px; color: #333; }
.mark .ic { color: #666; }
.time { font-size: 8px; color: #333; }
.time.fresh { color: #2f72d6; }
.preview { color: #777; }
.scroller { flex: 1; min-height: 0; display: flex; }
.rows { flex: 1; display: grid; grid-template-rows: repeat(7, 1fr) 15px; }
.cut { overflow: hidden; }
.cut .lead { padding-left: 18px; border-bottom: 0; }
.bar { width: 11px; flex: none; background: #f5f5f5; display: flex; flex-direction: column; align-items: center; padding: 5px 0; }
.up { border: 2px solid transparent; border-bottom: 3px solid #777; border-top: 0; }
.down { border: 2px solid transparent; border-top: 3px solid #777; border-bottom: 0; margin-top: auto; }
.thumb { width: 5px; margin-top: 6px; border-radius: 2px; background: #7c7c7c; height: 67%; }
.thumb.short { height: 7%; }
.bar.page { width: 12px; background: none; padding: 71px 1px 5px 0; }

.reading { flex: 1; min-width: 0; position: relative; display: flex; flex-direction: column; gap: 7px; margin-left: 6px; }
.subject { height: 60px; flex: none; padding: 0 8px; box-shadow: 0 1px 2px #bbb; }
.titleline { height: 29px; display: flex; align-items: center; gap: 4px; border-bottom: 1px solid #e9e9e9; padding-top: 3px; }
h1 { margin: 0; display: flex; font-size: 10px; font-weight: 600; color: #222; white-space: nowrap; }
.tleft { width: 144px; }
.label { font-size: 8px; color: #444; white-space: nowrap; }
.fold { margin-left: auto; margin-right: 5px; color: #444; }
.attachline { padding: 11px 0 0 7px; color: #666; }
.message { flex: 1; min-height: 0; padding: 9px 15px 0 8px; border-radius: 3px 3px 0 0; }
.msghead { display: flex; justify-content: space-between; align-items: flex-start; }
.avatar.big { width: 26px; height: 26px; margin-top: 2px; position: relative; font-weight: 700; }
.presence { position: absolute; right: -1px; bottom: 0; width: 9px; height: 9px; fill: none; }
.side { display: flex; flex-direction: column; align-items: flex-end; }
.actions { display: flex; align-items: center; gap: 11px; height: 13px; }
.actions button { height: 13px; }
.pair { gap: 3px; color: #666; }
.ruled { border-left: 1px solid #ddd; padding-left: 5px; }
.actions .ruled { margin-left: -6px; }
.actions .dots { padding-left: 7px; margin-right: 1px; }
time { font-size: 8px; line-height: 12px; margin-top: 5px; color: #444; }
.attachment { width: 59px; height: 31px; margin: 12px 0 0 144px; display: flex; border: 1px solid #ececec; border-left: 0; border-radius: 0 2px 2px 0; }
.file { width: 37px; padding: 6px 3px 0 0; display: flex; justify-content: flex-end; overflow: hidden; color: #666; white-space: nowrap; }
.attachment button { margin: 0 auto; color: #555; }
.body { margin: 42px 0 0; padding-left: 521px; display: flex; flex-direction: column; font-size: 8px; line-height: 13px; color: #222; white-space: nowrap; }
.cover { position: absolute; left: 34px; top: 2px; width: 118px; height: 72px; background: #fff; }

.taskbar { height: 27px; flex: none; display: flex; align-items: stretch; background: #17252d; color: #eef1f3; }
.start { width: 31px; justify-content: center; }
.find { width: 135px; display: flex; align-items: center; gap: 7px; padding-left: 7px; background: #f0f0f0; border-top: 1px solid #ccc; color: #333; }
.find input { flex: 1; min-width: 0; border: 0; padding: 0; background: none; font: inherit; color: #333; outline: none; }
.find input::placeholder { color: #333; opacity: 1; }
.gap { width: 52px; background: #fff; }
.task { width: 28px; margin-right: 4px; justify-content: center; border-bottom: 2px solid #76b1e2; }
.task.active { width: 32px; margin: 0 2px 0 -2px; background: #46535b; }
.task.plain { width: 32px; margin-right: 3px; border: 0; color: #ccc; }
.weather { margin-left: auto; display: flex; align-items: center; gap: 5px; white-space: nowrap; }
.tray { display: flex; align-items: center; gap: 5px; margin-left: 15px; }
.clock { width: 48px; display: flex; flex-direction: column; justify-content: center; align-items: center; font-size: 8px; line-height: 12px; }
.notify { width: 32px; justify-content: center; padding-right: 8px; }
</style>
